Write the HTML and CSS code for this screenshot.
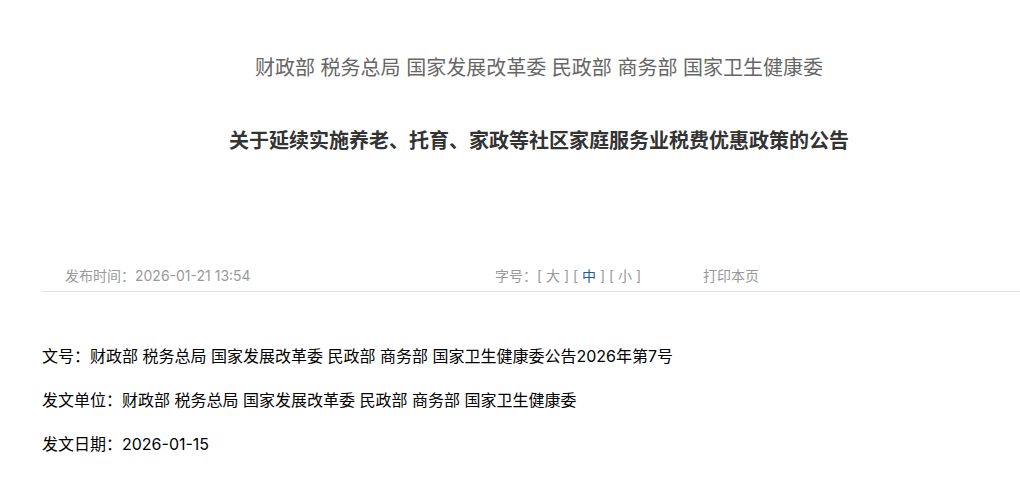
FILE: index.html
```html
<!DOCTYPE html>
<html lang="zh-CN">
<head>
    <meta charset="UTF-8">
    <title>关于延续实施养老、托育、家政等社区家庭服务业税费优惠政策的公告</title>
    <link rel="stylesheet" href="styles.css">
</head>
<body>
    <div class="container">
        <div class="header">
            <h2 class="org">财政部 税务总局 国家发展改革委 民政部 商务部 国家卫生健康委</h2>
            <h1 class="title">关于延续实施养老、托育、家政等社区家庭服务业税费优惠政策的公告</h1>
        </div>
        <div class="meta">
            <span class="pub-time">发布时间：2026-01-21 13:54</span>
            <span class="font-size">字号：<a href="#">[ 大 ]</a> <a href="#" class="active">[ <b>中</b> ]</a> <a href="#">[ 小 ]</a></span>
            <a href="#" class="print">打印本页</a>
        </div>
        <div class="info">
            <p>文号：财政部 税务总局 国家发展改革委 民政部 商务部 国家卫生健康委公告2026年第7号</p>
            <p>发文单位：财政部 税务总局 国家发展改革委 民政部 商务部 国家卫生健康委</p>
            <p>发文日期：2026-01-15</p>
        </div>
    </div>
</body>
</html>
```
FILE: styles.css
```css
html, body {
    overflow-x: hidden;
}
body {
    margin: 0;
    padding: 0;
    background: #fff;
    font-family: Inter, "Noto Sans CJK SC", sans-serif;
    color: #000;
}
.container {
    width: 994px;
    margin-left: 42px;
}
.header {
    padding-top: 53px;
    text-align: center;
}
.org {
    margin: 0;
    font-size: 20px;
    line-height: 30px;
    font-weight: normal;
    color: #666;
}
.title {
    margin: 43px 0 0;
    font-size: 20px;
    line-height: 30px;
    font-weight: bold;
    color: #333;
}
.meta {
    display: flex;
    margin-top: 110px;
    padding: 0 0 5px 23px;
    border-bottom: 1px solid #e4e4e4;
    font-size: 14px;
    line-height: 20px;
    color: #999;
}
.meta a {
    color: #999;
    text-decoration: none;
}
.pub-time {
    width: 430px;
}
.font-size {
    width: 208px;
}
.font-size a.active b {
    font-weight: normal;
    color: #1d57b0;
}
.info {
    padding-top: 52px;
}
.info p {
    margin: 0 0 20px;
    font-size: 16px;
    line-height: 24px;
}
```
